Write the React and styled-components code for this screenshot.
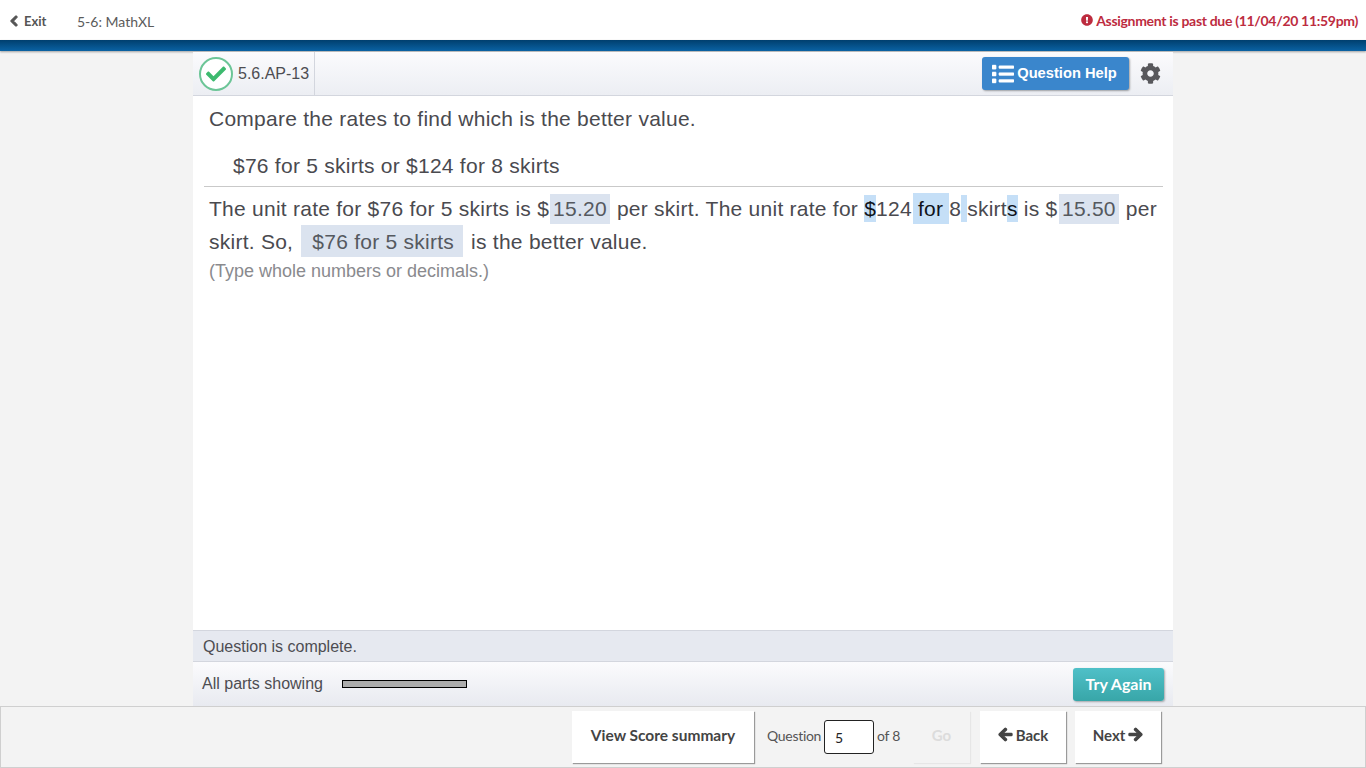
import React from 'react';
import styled, { createGlobalStyle } from 'styled-components';
import {
  FaChevronLeft,
  FaExclamationCircle,
  FaList,
  FaCog,
  FaArrowLeft,
  FaArrowRight,
  FaCheck,
} from 'react-icons/fa';

const GlobalStyle = createGlobalStyle`
  html, body { margin: 0; padding: 0; height: 100%; overflow: hidden; }
  body { background: #f3f3f3; font-family: 'Liberation Sans', Arial, sans-serif; color: #4a4a4f; }
  * { box-sizing: border-box; }
`;

const Page = styled.div`
  display: flex;
  flex-direction: column;
  height: 768px;
`;

const TopBar = styled.header`
  height: 40px;
  background: #fff;
  display: flex;
  align-items: center;
  justify-content: space-between;
  padding: 2px 8px 0 8px;
  font-family: Lato, sans-serif;
  font-size: 14px;
`;

const TopLeft = styled.div`
  display: flex;
  align-items: center;
`;

const ExitLink = styled.a`
  display: flex;
  align-items: center;
  gap: 4px;
  font-weight: 700;
  font-size: 13px;
  color: #555;
  width: 69px;
  svg { font-size: 12px; stroke: currentColor; stroke-width: 50; }
`;

const Title = styled.span`
  color: #5b5b5b;
  font-size: 14px;
`;

const PastDue = styled.div`
  display: flex;
  align-items: center;
  gap: 3px;
  margin-bottom: 2px;
  color: #bd2c3f;
  font-weight: 700;
  font-size: 14px;
  letter-spacing: -0.31px;
  svg { font-size: 12px; }
`;

const BlueBand = styled.div`
  height: 11px;
  background: linear-gradient(to bottom, #003f6e, #0a62a3);
  box-shadow: 0 1px 2px rgba(0, 0, 0, 0.35);
`;

const Panel = styled.main`
  width: 980px;
  margin: 1px 0 0 193px;
  flex: 1;
  min-height: 0;
  display: flex;
  flex-direction: column;
  background: #fff;
`;

const QuestionHeader = styled.div`
  height: 44px;
  flex: none;
  display: flex;
  align-items: center;
  justify-content: space-between;
  background: linear-gradient(to bottom, #fbfbfd, #eceef3);
  border-bottom: 1px solid #d3d6de;
`;

const QuestionId = styled.div`
  height: 43px;
  display: flex;
  align-items: center;
  gap: 5px;
  padding: 0 5px 0 6px;
  border-right: 1px solid #d3d6de;
  font-size: 16px;
  color: #4d4d52;
`;

const CheckBadge = styled.span`
  width: 34px;
  height: 34px;
  border-radius: 50%;
  border: 2px solid #6cc597;
  background: #fff;
  display: flex;
  align-items: center;
  justify-content: center;
  color: #3dba6f;
  font-size: 20px;
`;

const HeaderActions = styled.div`
  display: flex;
  align-items: center;
  gap: 11px;
  padding-right: 12px;
`;

const HelpButton = styled.button`
  height: 33px;
  width: 147px;
  display: flex;
  align-items: center;
  justify-content: center;
  gap: 3px;
  border: 0;
  border-radius: 3px;
  padding: 0 2px 2px 0;
  background: #3a86cc;
  color: #fff;
  font: 700 14.7px 'Liberation Sans', Arial, sans-serif;
  box-shadow: 1px 1px 2px rgba(0, 0, 0, 0.35);
  svg { font-size: 22px; margin-top: 2px; stroke: currentColor; stroke-width: 10; }
`;

const Gear = styled.span`
  display: flex;
  color: #58585c;
  font-size: 21px;
`;

const Body = styled.div`
  flex: 1;
  min-height: 0;
  font-size: 21px;
  letter-spacing: 0.25px;
  color: #4a4a4f;
`;

const Prompt = styled.p`
  margin: 0;
  padding: 7px 16px 0;
  line-height: 32px;
`;

const Statement = styled.p`
  margin: 0;
  padding: 15px 16px 4px 40px;
  line-height: 32px;
`;

const Rule = styled.div`
  margin: 0 10px 0 11px;
  border-top: 1px solid #c9c9c9;
`;

const Answer = styled.div`
  padding: 5px 12px 0 16px;
  line-height: 33px;
`;

const Filled = styled.span`
  display: inline-block;
  height: 30px;
  line-height: 30px;
  margin: 2px 7px 0 ${(props) => props.$left || '1px'};
  padding: 0 3px;
  background: #dbe3ef;
  color: #55595f;
  vertical-align: top;
`;

const FilledChoice = styled(Filled)`
  height: 32px;
  line-height: 33px;
  margin: 0 2px;
  padding: 0 9px 0 11px;
`;

const Sel = styled.span`
  display: inline-block;
  height: ${(props) => (props.$tall ? '31px' : '27px')};
  line-height: ${(props) => (props.$tall ? '32px' : '28px')};
  margin: ${(props) => (props.$tall ? '1px 0 0 1px' : '3px 0 0')};
  padding: ${(props) => (props.$tall ? '0 6px 0 5px' : '0')};
  background: #c5dff7;
  color: #10131a;
  vertical-align: top;
`;

const Hint = styled.div`
  font-size: 18px;
  letter-spacing: 0;
  line-height: 24px;
  margin-top: 1px;
  color: #8a8a8e;
`;

const StatusRow = styled.div`
  height: 32px;
  flex: none;
  display: flex;
  align-items: center;
  padding: 1px 0 0 10px;
  background: #e6e9f0;
  border-top: 1px solid #d3d6de;
  border-bottom: 1px solid #d3d6de;
  font-size: 16px;
  color: #4d4d52;
`;

const PartsRow = styled.div`
  height: 44px;
  flex: none;
  display: flex;
  align-items: center;
  padding: 0 9px;
  background: linear-gradient(to bottom, #fbfbfd, #e8eaf0);
  font-size: 16px;
  color: #4d4d52;
`;

const PartsLabel = styled.span`
  width: 140px;
`;

const PartsBar = styled.span`
  width: 125px;
  height: 8px;
  background: #adadad;
  border: 1px solid #000;
`;

const TryAgain = styled.button`
  margin-left: auto;
  width: 91px;
  height: 33px;
  border: 0;
  border-radius: 3px;
  padding: 0 0 2px;
  background: linear-gradient(to bottom, #4fc0c8, #38a6a8);
  color: #fff;
  font: 700 16px Lato, sans-serif;
  box-shadow: 1px 1px 2px rgba(0, 0, 0, 0.3);
`;

const BottomBar = styled.footer`
  height: 62px;
  flex: none;
  display: flex;
  align-items: flex-start;
  justify-content: flex-end;
  padding: 4px 204px 0 0;
  background: #f3f3f3;
  border: 1px solid #cfcfcf;
  font-family: Lato, sans-serif;
`;

const NavButton = styled.button`
  height: 52px;
  width: ${(props) => props.$width};
  margin-right: ${(props) => props.$gap || '0'};
  display: flex;
  align-items: center;
  justify-content: center;
  gap: 3px;
  border: 0;
  padding: 0 0 5px;
  background: ${(props) => (props.disabled ? '#f3f3f3' : '#fff')};
  color: ${(props) => (props.disabled ? '#dcdcdc' : '#444')};
  font: 700 ${(props) => props.$size || '15px'} Lato, sans-serif;
  box-shadow: ${(props) => (props.disabled ? '1px 1px 1px #e6e6e6' : '1px 1px 1px #9a9a9a')};
  svg { stroke: currentColor; stroke-width: 40; }
`;

const Jump = styled.div`
  height: 52px;
  width: 159px;
  display: flex;
  align-items: center;
  padding: 0 0 4px 13px;
  gap: 3px;
  font-size: 14px;
  letter-spacing: -0.3px;
  color: #555;
`;

const JumpInput = styled.input`
  width: 50px;
  height: 34px;
  margin-top: 4px;
  padding: 0 0 0 10px;
  border: 1px solid #222;
  border-radius: 3px;
  background: #fff;
  font: 14px Lato, sans-serif;
  color: #222;
`;

export default function App() {
  return (
    <Page>
      <GlobalStyle />
      <TopBar>
        <TopLeft>
          <ExitLink><FaChevronLeft /> Exit</ExitLink>
          <Title>5-6: MathXL</Title>
        </TopLeft>
        <PastDue><FaExclamationCircle /> Assignment is past due (11/04/20 11:59pm)</PastDue>
      </TopBar>
      <BlueBand />
      <Panel>
        <QuestionHeader>
          <QuestionId>
            <CheckBadge><FaCheck /></CheckBadge>
            5.6.AP-13
          </QuestionId>
          <HeaderActions>
            <HelpButton><FaList /> Question Help</HelpButton>
            <Gear><FaCog /></Gear>
          </HeaderActions>
        </QuestionHeader>
        <Body>
          <Prompt>Compare the rates to find which is the better value.</Prompt>
          <Statement>$76 for 5 skirts or $124 for 8 skirts</Statement>
          <Rule />
          <Answer>
            The unit rate for $76 for 5 skirts is $<Filled>15.20</Filled>per skirt. The unit rate for <Sel>$</Sel>124<Sel $tall>for</Sel>8<Sel>&nbsp;</Sel>skirt<Sel>s</Sel> is $<Filled $left="1.5px">15.50</Filled>per skirt. So, <FilledChoice>$76 for 5 skirts</FilledChoice> is the better value.
            <Hint>(Type whole numbers or decimals.)</Hint>
          </Answer>
        </Body>
        <StatusRow>Question is complete.</StatusRow>
        <PartsRow>
          <PartsLabel>All parts showing</PartsLabel>
          <PartsBar />
          <TryAgain>Try Again</TryAgain>
        </PartsRow>
      </Panel>
      <BottomBar>
        <NavButton $width="182px" $size="15.5px">View Score summary</NavButton>
        <Jump>
          Question <JumpInput defaultValue="5" /> of 8
        </Jump>
        <NavButton $width="57px" $gap="10px" disabled>Go</NavButton>
        <NavButton $width="86px" $gap="9px"><FaArrowLeft /> Back</NavButton>
        <NavButton $width="86px">Next <FaArrowRight /></NavButton>
      </BottomBar>
    </Page>
  );
}
